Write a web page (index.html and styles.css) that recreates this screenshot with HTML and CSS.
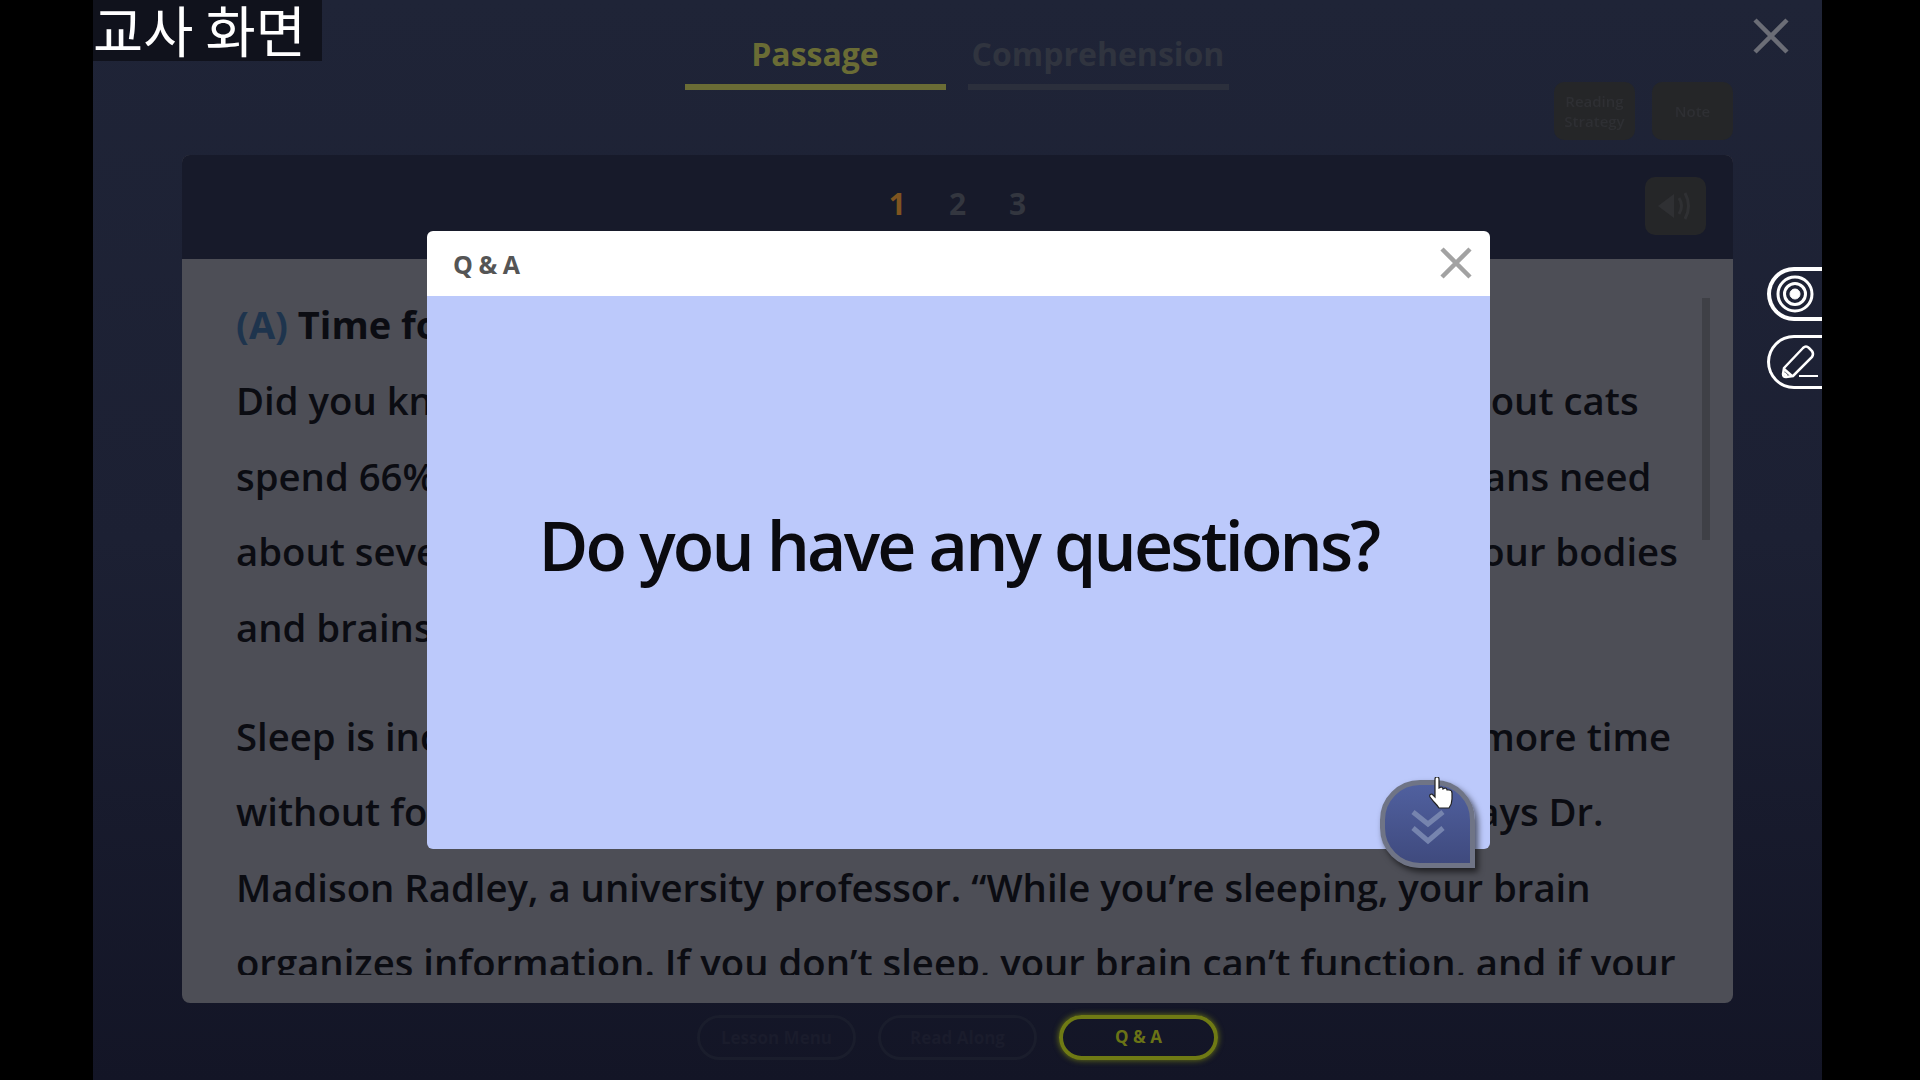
FILE: index.html
```html
<!DOCTYPE html>
<html lang="en">
<head>
<meta charset="utf-8"/>
<title>Q&amp;A</title>
<link rel="stylesheet" href="styles.css">
</head>
<body>
<div class="stage">
  <div class="topbar">
    <div></div>
    <div class="tabs">
      <div class="tab tab-on">Passage</div>
      <div class="tab">Comprehension</div>
    </div>
    <div class="tools">
      <div class="tool tool-small">Reading<br>Strategy</div>
      <div class="tool">Note</div>
    </div>
  </div>

  <div class="panel">
    <div class="panel-head">
      <div class="pages">
        <span class="page page-on">1</span>
        <span class="page">2</span>
        <span class="page">3</span>
      </div>
      <div class="speaker">
        <svg width="44" height="42" viewBox="0 0 44 42" fill="none">
          <path d="M4 21 L20 9 V33 Z" fill="#2f3033"/>
          <path d="M25 13 Q30 21 25 29 M31 8 Q38 21 31 34" stroke="#2f3033" stroke-width="3"/>
        </svg>
      </div>
    </div>
    <div class="passage">
      <div class="scrollbar"></div>
      <p class="heading"><span class="mark">(A)</span> Time for Some Shut-Eye</p>
      <div class="para">
        <div>Did you know that we sleep away a third of our lives? Experts say about cats</div>
        <div>spend 66% of their lives asleep, while dogs spend around 50%. Humans need</div>
        <div>about seven or eight hours of sleep each night. Sleep is what keeps our bodies</div>
        <div>and brains healthy.</div>
      </div>
      <div class="para">
        <div>Sleep is incredibly important. In fact, we humans can survive much more time</div>
        <div>without food than without sleep. “Sleep is really quite important,” says Dr.</div>
        <div>Madison Radley, a university professor. “While you’re sleeping, your brain</div>
        <div>organizes information. If you don’t sleep, your brain can’t function, and if your</div>
      </div>
    </div>
  </div>

  <div class="bottom">
    <div class="pill">Lesson Menu</div>
    <div class="pill">Read Along</div>
    <div class="pill pill-on">Q &amp; A</div>
  </div>

  <!-- overlays -->
  <div class="label">교사 화면</div>

  <svg class="close-main" width="36" height="36" viewBox="0 0 36 36">
    <path d="M2 2 L34 34 M34 2 L2 34" stroke="#6b6d76" stroke-width="4.5"/>
  </svg>

  <div class="side side-target">
    <svg width="44" height="44" viewBox="0 0 44 44" fill="none" stroke="#fff">
      <circle cx="22" cy="22" r="17" stroke-width="3"/>
      <circle cx="22" cy="22" r="10.5" stroke-width="3"/>
      <circle cx="22" cy="22" r="5" stroke-width="1" fill="#fff"/>
    </svg>
  </div>
  <div class="side side-pen">
    <svg width="44" height="44" viewBox="0 0 44 44" fill="none" stroke="#fff" stroke-width="2.5">
      <path d="M10 28 L29 8 Q32 5 35 8 L38 11 Q40 14 38 17 L19 36 L12 37 Q9 37 9 34 Z"/>
      <path d="M10 29 L18 36 M10 33 L13 36" />
      <path d="M25 36 H44" stroke-width="2"/>
    </svg>
  </div>

  <div class="modal">
    <div class="modal-head">
      <span class="modal-title">Q &amp; A</span>
      <svg class="modal-close" width="32" height="32" viewBox="0 0 32 32">
        <path d="M2 2 L30 30 M30 2 L2 30" stroke="#a2a2a2" stroke-width="4.5"/>
      </svg>
    </div>
    <div class="modal-body">Do you have any questions?</div>
    <div class="down">
      <svg width="34" height="36" viewBox="0 0 34 36" fill="none" stroke="#7684ae" stroke-width="5">
        <path d="M2 3 L17 15 L32 3"/>
        <path d="M2 19 L17 32 L32 19"/>
      </svg>
    </div>
    <svg class="hand" width="24" height="32" viewBox="0 0 24 32">
      <path d="M6 2 Q6 0 8 0 Q10 0 10 2 V11 L12 10 Q14 10 14 12 L16 11 Q18 11 18 13 L20 13 Q23 13 23 16 V22 Q23 27 20 31 H10 Q8 28 5 25 L1 20 Q0 17 3 17 L6 20 Z" fill="#fff" stroke="#222" stroke-width="1.2"/>
    </svg>
  </div>
</div>
</body>
</html>
```

FILE: styles.css
```css
html, body {
  margin: 0;
  height: 100%;
  background: #000;
  overflow: hidden;
}

body {
  padding-left: 93px;
  box-sizing: border-box;
  font-family: "Open Sans", "Noto Sans", sans-serif;
}

.stage {
  position: relative;
  width: 1729px;
  height: 1080px;
  box-sizing: border-box;
  padding: 0 89px;
  display: flex;
  flex-direction: column;
  background: linear-gradient(180deg, #1f2437 0%, #1c2033 50%, #131526 100%);
}

/* top row */
.topbar {
  height: 155px;
  display: grid;
  grid-template-columns: 1fr auto 1fr;
  align-items: start;
}

.tabs {
  display: flex;
  gap: 22px;
  padding-top: 30px;
  margin-left: -2px;
}

.tab {
  width: 261px;
  height: 60px;
  box-sizing: border-box;
  border-bottom: 6px solid #2b2f3c;
  text-align: center;
  font-size: 32px;
  font-weight: 700;
  line-height: 48px;
  color: #30343f;
}

.tab-on {
  color: #6a6c35;
  border-bottom-color: #6a6c35;
}

.tools {
  justify-self: end;
  display: flex;
  gap: 17px;
  padding-top: 82px;
}

.tool {
  width: 81px;
  height: 58px;
  border-radius: 10px;
  background: #252628;
  color: #2e2f33;
  font-size: 15px;
  font-weight: 600;
  text-align: center;
  line-height: 58px;
  filter: blur(.7px);
}

.tool-small {
  line-height: 20px;
  padding-top: 9px;
  height: 49px;
}

/* passage panel */
.panel {
  height: 848px;
  display: flex;
  flex-direction: column;
  border-radius: 8px;
  overflow: hidden;
  background: #4d4e56;
}

.panel-head {
  height: 104px;
  flex: none;
  background: #171a2a;
  position: relative;
  display: flex;
  justify-content: center;
  align-items: center;
}

.pages {
  display: flex;
  gap: 43px;
  font-size: 30px;
  font-weight: 700;
  margin-top: -7px;
}

.page { color: #33363f; }
.page-on { color: #7e5420; }

.speaker {
  position: absolute;
  right: 27px;
  top: 22px;
  width: 61px;
  height: 58px;
  border-radius: 10px;
  background: #252628;
  display: flex;
  justify-content: center;
  align-items: center;
}

.passage {
  position: relative;
  height: 716px;
  flex: none;
  box-sizing: border-box;
  padding-left: 54px;
  overflow: hidden;
  color: #0b0c12;
  font-size: 38.3px;
  font-weight: 600;
  line-height: 75.4px;
  white-space: nowrap;
}

.scrollbar {
  position: absolute;
  right: 23px;
  top: 39px;
  width: 8px;
  height: 242px;
  background: #3f4046;
}

.heading {
  margin: 0 0 1px 0;
  padding-top: 28px;
  font-weight: 700;
  font-size: 38px;
}

.mark { color: #1e344d; }

.para { margin-bottom: 34px; }

/* bottom row */
.bottom {
  display: flex;
  justify-content: center;
  gap: 22px;
  padding: 12px 0 0 0;
}

.pill {
  width: 159px;
  height: 45px;
  border: 3px solid #1a1d2c;
  border-radius: 24px;
  box-sizing: border-box;
  color: #1a1c2c;
  font-size: 17px;
  font-weight: 700;
  text-align: center;
  line-height: 39px;
}

.pill-on {
  border: 4px solid #6f7a14;
  color: #6a7316;
  line-height: 36px;
  box-shadow: 0 0 6px #6f7a14;
}

/* things lying over the page */
.label {
  position: absolute;
  left: 0;
  top: 0;
  width: 229px;
  height: 61px;
  background: #10121c;
  color: #fff;
  font-family: "Noto Sans CJK KR", sans-serif;
  font-size: 54.5px;
  line-height: 57px;
  white-space: nowrap;
}

.close-main {
  position: absolute;
  left: 1660px;
  top: 18px;
}

.side {
  position: absolute;
  right: 0;
  width: 55px;
  height: 54px;
  box-sizing: border-box;
  border: 3px solid #fff;
  border-right: 0;
  border-radius: 27px 0 0 27px;
  display: flex;
  align-items: center;
  padding-left: 4px;
}

.side svg { flex: none; }

.side-target { top: 267px; border-width: 4px; padding-left: 2px; }
.side-pen { top: 335px; }

.modal {
  position: absolute;
  left: 334px;
  top: 231px;
  width: 1063px;
  height: 618px;
  display: flex;
  flex-direction: column;
}

.modal-head {
  height: 65px;
  flex: none;
  box-sizing: border-box;
  padding: 0 18px 0 26px;
  background: #fff;
  border-radius: 6px 6px 0 0;
  display: flex;
  justify-content: space-between;
  align-items: center;
}

.modal-close { margin-top: -2px; }

.modal-title {
  font-size: 25px;
  font-weight: 700;
  color: #555;
  word-spacing: -3px;
  letter-spacing: 1px;
}

.modal-body {
  flex: 1;
  display: flex;
  justify-content: center;
  padding-top: 204px;
  box-sizing: border-box;
  background: #bcc9fb;
  border-radius: 0 0 6px 6px;
  color: #0a0a0f;
  font-size: 68px;
  font-weight: 600;
  letter-spacing: -2.8px;
  line-height: 90px;
}

.down {
  position: absolute;
  left: 953px;
  top: 549px;
  width: 95px;
  height: 88px;
  box-sizing: border-box;
  border: 5px solid #6f7486;
  border-radius: 40px 40px 0 40px;
  background: linear-gradient(180deg, #50609f, #3f4a7e);
  box-shadow: 3px 4px 6px rgba(0, 0, 0, .6);
  display: flex;
  justify-content: center;
  align-items: center;
  padding-top: 6px;
}

.hand {
  position: absolute;
  left: 1002px;
  top: 546px;
}
```
